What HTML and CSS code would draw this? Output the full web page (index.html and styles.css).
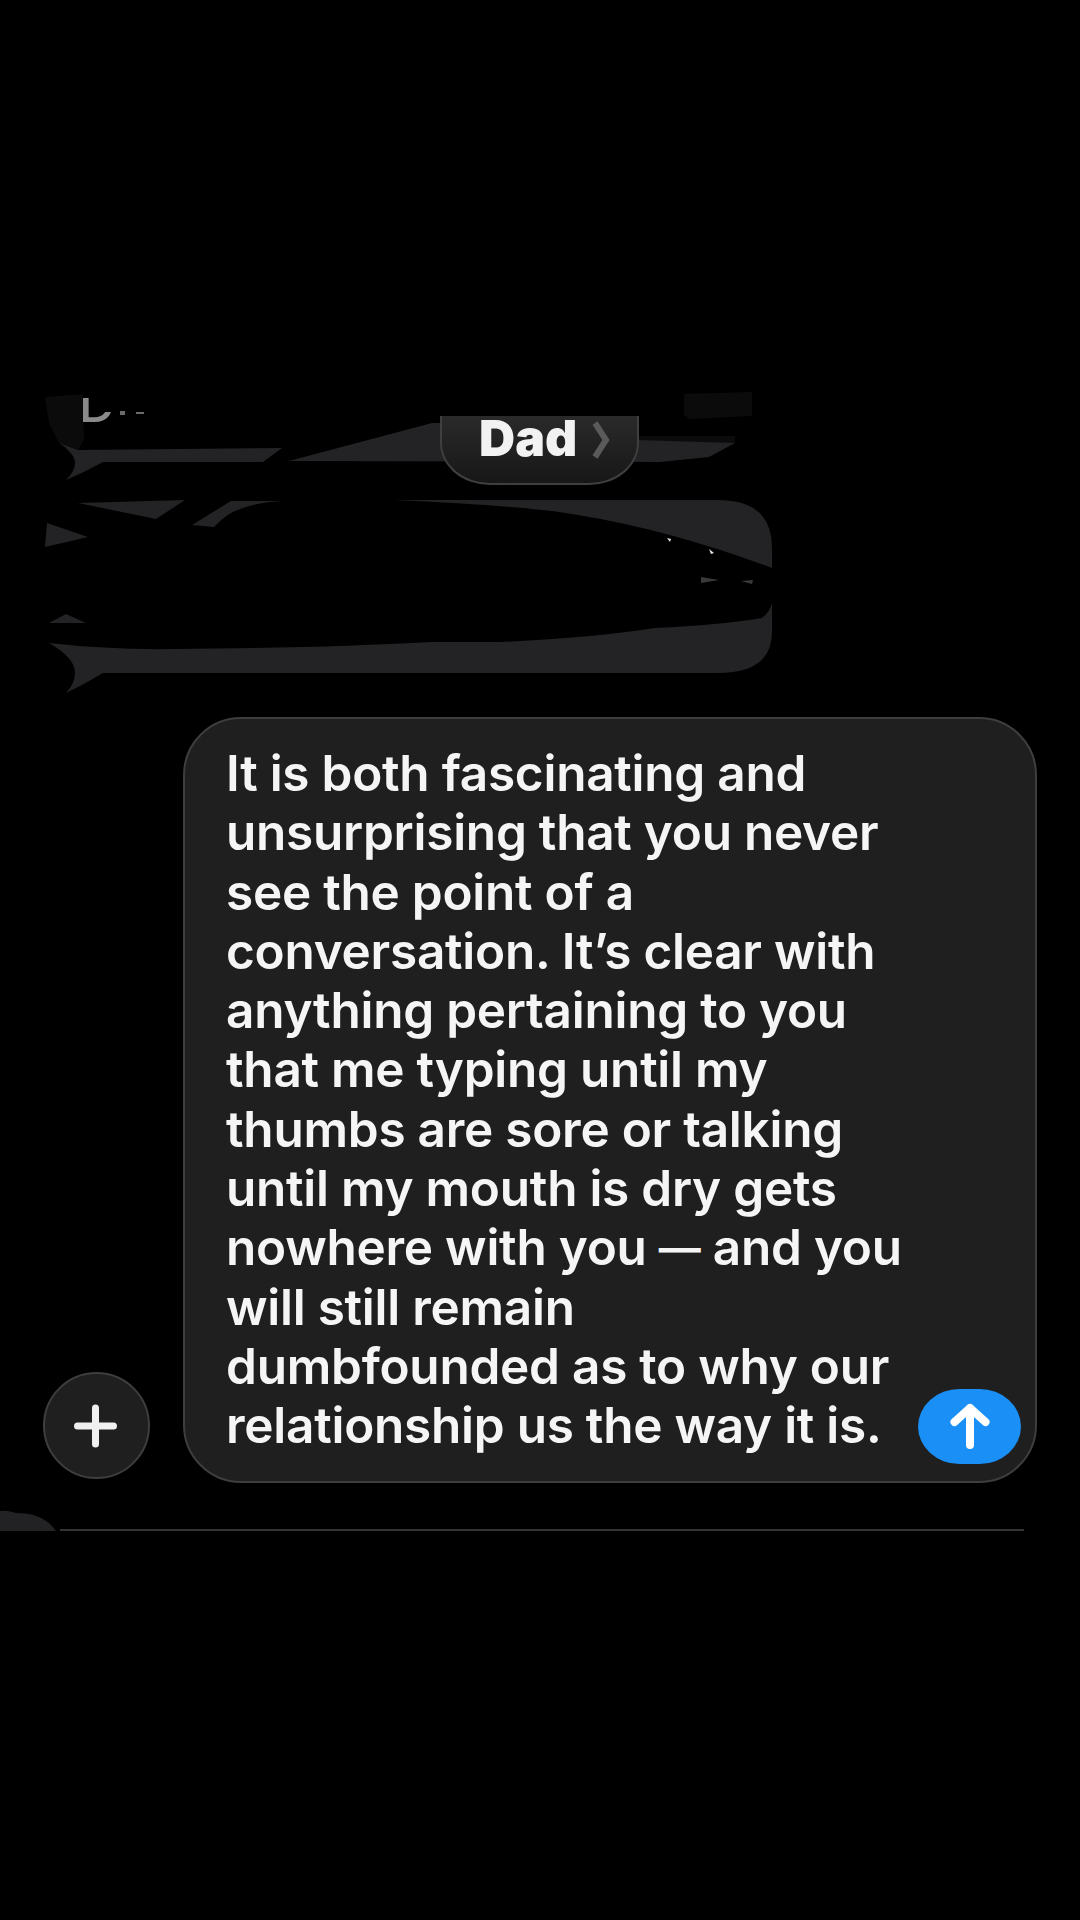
FILE: index.html
```html
<!DOCTYPE html>
<html lang="en">
<head>
    <meta charset="UTF-8">
    <meta name="viewport" content="width=device-width, initial-scale=1.0">
    <title>Messages</title>
    <link rel="stylesheet" href="styles.css">
</head>
<body>
    <!-- Erased message thread -->
    <section class="thread">
        <svg class="smears" width="1080" height="327" viewBox="0 390 1080 327">
            <defs>
                <clipPath id="nameClip">
                    <polygon points="78,398 90,398 90,412 112,412 112,426 78,426"/>
                </clipPath>
            </defs>
            <path class="faint" d="M45 397 L83 394 L84 440 L78 450 L59 443 L49 423 Z"/>
            <path class="faint" d="M684 394 L752 392 L752 416 L690 419 L684 415 Z"/>
            <path class="faint" d="M636 436 L735 436 L735 443 L636 446 Z"/>
            <text class="sender" x="79" y="422" clip-path="url(#nameClip)">D</text>
            <path class="sender-bit" d="M120 411 h5 v4 h-5 z M136 412 h8 v2 h-8 z"/>
            <path class="band" d="M78 450 L282 448 L263 462 L103 462 Q85 472 66 480 Q78 468 74 458 Q70 450 59 443 Z"/>
            <path class="band" d="M289 461 L432 423 L445 423 L636 440 L735 443 L709 457 L660 462 Z"/>
            <path class="band" d="M78 503 L185 500 L156 519 Z"/>
            <path class="band" d="M231 501 L192 525 L214 527 Q228 512 243 508 Q260 502 282 501 Z"/>
            <path class="band" d="M394 500 L718 500 Q772 500 772 548 L772 568 Q670 530 578 515 Q530 506 394 500 Z"/>
            <path class="band" d="M45 547 L47 523 L88 537 Z"/>
            <path class="band" d="M49 623 L66 614 L86 623 Z"/>
            <path class="band" d="M49 643 Q110 650 175 649 Q320 648 432 642 L500 642 Q590 638 655 628 Q720 625 762 618 Q770 612 772 603 L772 632 Q772 673 718 673 L103 673 Q85 684 66 693 Q78 680 74 667 Q70 655 49 643 Z"/>
            <path class="fleck" d="M667 538 l4 1 l-1 3 z M709 549 l5 4 l-3 1 z"/>
            <path class="dim" d="M701 577 l18 3 l-18 3 z M741 581 l12 -1 l-1 4 z"/>
        </svg>
        <a class="contact-pill">
            <span class="contact-name">Dad</span>
            <svg class="chevron" width="18" height="38" viewBox="0 0 18 38">
                <path d="M3 2 L14 19 L3 36" fill="none" stroke="#5a5a5a" stroke-width="6"/>
            </svg>
        </a>
    </section>

    <section class="composer">
        <button class="add-btn" type="button">
            <svg width="46" height="46" viewBox="0 0 46 46">
                <path d="M21.5 5 V41 M3.5 23 H39.5" stroke="#f0f0f0" stroke-width="7" stroke-linecap="round"/>
            </svg>
        </button>
        <div class="draft">
            <p class="draft-text">It is both fascinating and<br>unsurprising that you never<br>see the point of a<br>conversation. It’s clear with<br>anything pertaining to you<br>that me typing until my<br>thumbs are sore or talking<br>until my mouth is dry gets<br>nowhere with you <span class="dash">—</span> and you<br>will still remain<br>dumbfounded as to why our<br>relationship us the way it is.</p>
            <button class="send-btn" type="button">
                <svg width="46" height="50" viewBox="0 0 46 50">
                    <path d="M23 43 V6 M7.5 20 L23 6 L38.5 20" fill="none" stroke="#fff" stroke-width="8" stroke-linecap="round" stroke-linejoin="round"/>
                </svg>
            </button>
        </div>
    </section>

    <div class="cut-edge">
        <svg width="1080" height="24" viewBox="0 0 1080 24">
            <path class="blob" d="M0 2 Q6 1 16 4 Q44 4 56 22 L0 22 Z"/>
            <path class="edge-line" d="M60 21 H1024"/>
        </svg>
    </div>
</body>
</html>
```

FILE: styles.css
```css
* {
    box-sizing: border-box;
}
html, body {
    margin: 0;
    height: 1920px;
    background-color: #000;
}
body {
    font-family: 'Inter', 'Liberation Sans', sans-serif;
    color: #f5f5f5;
    padding-top: 390px;
    overflow: hidden;
}

/* thread */
.thread {
    position: relative;
    height: 327px;
}
.smears {
    position: absolute;
    left: 0;
    top: 0;
    overflow: visible;
}
.faint {
    fill: #0b0b0c;
}
.band {
    fill: #232325;
}
.fleck {
    fill: #e6e6e6;
}
.dim {
    fill: #3a3a3c;
}
.sender {
    fill: #8a8a8a;
    font-size: 50px;
    font-weight: 500;
}
.sender-bit {
    fill: #6a6a6a;
}
.contact-pill {
    position: absolute;
    left: 440px;
    top: 26px;
    width: 199px;
    height: 69px;
    display: flex;
    align-items: flex-start;
    gap: 15px;
    padding: 0 0 0 37px;
    background-image: linear-gradient(#2a2a2b, #171718);
    border: 2px solid #3f3f40;
    border-top: none;
    border-radius: 0 0 50px 50px / 0 0 42px 42px;
}
.contact-name {
    font-size: 50px;
    font-weight: 900;
    line-height: 40px;
    margin-top: 2px;
    color: #f2f2f2;
}
.chevron {
    margin-top: 5px;
}

/* composer */
.composer {
    display: flex;
    align-items: flex-end;
    gap: 33px;
    padding-left: 43px;
}
.add-btn {
    width: 107px;
    height: 107px;
    margin-bottom: 4px;
    padding: 0;
    display: flex;
    align-items: center;
    justify-content: center;
    background-color: #1f1f20;
    border: 2px solid #3e3e3f;
    border-radius: 50%;
}
.draft {
    position: relative;
    width: 854px;
    height: 766px;
    padding: 25px 0 0 41px;
    background-color: #1f1f20;
    border: 2px solid #3e3e3f;
    border-radius: 58px;
}
.draft-text {
    margin: 0;
    font-size: 49.5px;
    font-weight: 560;
    letter-spacing: -0.25px;
    line-height: 59.3px;
    white-space: nowrap;
}
.dash {
    font-size: 42px;
    vertical-align: 2px;
}
.send-btn {
    position: absolute;
    right: 14px;
    bottom: 17px;
    width: 103px;
    height: 75px;
    padding: 0;
    display: flex;
    align-items: center;
    justify-content: center;
    background-color: #1a8ff5;
    border: none;
    border-radius: 42px / 38px;
}

/* bottom of the erased area */
.cut-edge {
    margin-top: 26px;
    height: 24px;
}
.cut-edge svg {
    display: block;
}
.blob {
    fill: #222224;
}
.edge-line {
    stroke: #343436;
    stroke-width: 2;
}
```
